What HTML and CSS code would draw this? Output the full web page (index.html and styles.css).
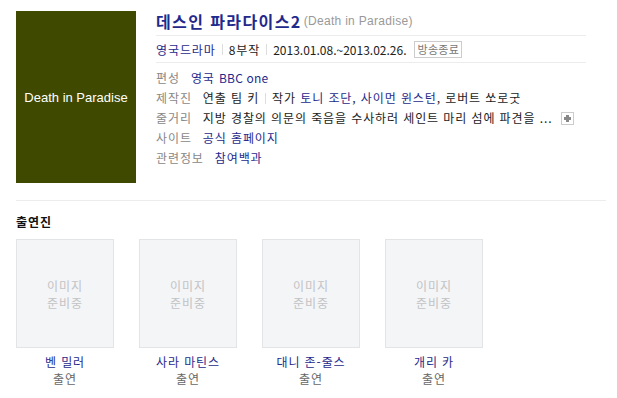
FILE: index.html
```html
<!DOCTYPE html>
<html lang="ko">
<head>
<meta charset="UTF-8">
<meta name="viewport" content="width=device-width, initial-scale=1.0">
<title>데스인 파라다이스2</title>
<link rel="stylesheet" href="styles.css">
</head>
<body>
<div class="profile">
  <div class="poster">Death in Paradise</div>
  <div class="info">
    <div class="title-row">
      <a href="#" class="title">데스인 파라다이스2</a>
      <span class="title-en">(Death in Paradise)</span>
    </div>
    <div class="meta-row">
      <a href="#" class="link">영국드라마</a>
      <span class="bar"></span>
      <span>8부작</span>
      <span class="bar"></span>
      <span class="date">2013.01.08.~2013.02.26.</span>
      <span class="badge">방송종료</span>
    </div>
    <dl class="details">
      <div class="detail">
        <dt>편성</dt>
        <dd><a href="#" class="link">영국 <span class="latin">BBC one</span></a></dd>
      </div>
      <div class="detail">
        <dt>제작진</dt>
        <dd>연출 팀 키<span class="bar"></span>작가 <a href="#" class="link">토니 조단</a>, <a href="#" class="link">사이먼 윈스턴</a>, 로버트 쏘로굿</dd>
      </div>
      <div class="detail">
        <dt>줄거리</dt>
        <dd>지방 경찰의 의문의 죽음을 수사하러 세인트 마리 섬에 파견을 ...<span class="more"></span></dd>
      </div>
      <div class="detail">
        <dt>사이트</dt>
        <dd><a href="#" class="link">공식 홈페이지</a></dd>
      </div>
      <div class="detail">
        <dt>관련정보</dt>
        <dd><a href="#" class="link">참여백과</a></dd>
      </div>
    </dl>
  </div>
</div>

<div class="cast">
  <h3>출연진</h3>
  <ul class="cast-list">
    <li class="actor">
      <div class="thumb"><span>이미지</span><span>준비중</span></div>
      <a href="#" class="name">벤 밀러</a>
      <span class="role">출연</span>
    </li>
    <li class="actor">
      <div class="thumb"><span>이미지</span><span>준비중</span></div>
      <a href="#" class="name">사라 마틴스</a>
      <span class="role">출연</span>
    </li>
    <li class="actor">
      <div class="thumb"><span>이미지</span><span>준비중</span></div>
      <a href="#" class="name">대니 존-줄스</a>
      <span class="role">출연</span>
    </li>
    <li class="actor">
      <div class="thumb"><span>이미지</span><span>준비중</span></div>
      <a href="#" class="name">개리 카</a>
      <span class="role">출연</span>
    </li>
  </ul>
</div>
</body>
</html>
```

FILE: styles.css
```css
body {
  font-family: "Noto Sans CJK KR", "Noto Sans", sans-serif;
  font-size: 12px;
  letter-spacing: 0.9px;
  color: #222;
  background-color: #fff;
  margin: 0;
  padding: 11px 11px 0 16px;
}

a {
  text-decoration: none;
}

.link {
  color: #1f2a8c;
}

.latin {
  letter-spacing: 0.2px;
}

.profile {
  display: flex;
  gap: 20px;
  padding-bottom: 17px;
  border-bottom: 1px solid #ececec;
  width: 590px;
}

.poster {
  width: 120px;
  height: 172px;
  flex-shrink: 0;
  background-color: #3f4a00;
  color: #fff;
  font-family: "Liberation Sans", Arial, sans-serif;
  font-size: 13px;
  letter-spacing: 0;
  display: flex;
  align-items: center;
  justify-content: center;
}

.info {
  width: 430px;
}

.title-row {
  height: 19px;
  padding-bottom: 5px;
  border-bottom: 1px solid #ececec;
  display: flex;
  align-items: center;
}

.title {
  color: #1f2a8c;
  font-size: 16px;
  font-weight: bold;
  letter-spacing: 1.4px;
}

.title-en {
  color: #999;
  font-size: 12px;
  margin-left: 2px;
  letter-spacing: 0.3px;
  font-family: "Liberation Sans", Arial, sans-serif;
}

.meta-row {
  height: 26px;
  border-bottom: 1px solid #ececec;
  display: flex;
  align-items: center;
}

.date {
  letter-spacing: 0;
}

.bar {
  display: inline-block;
  width: 1px;
  height: 11px;
  background-color: #ddd;
  margin: 0 6px;
  vertical-align: -1px;
}

.badge {
  margin-left: 8px;
  padding: 0 2px;
  height: 15px;
  line-height: 15px;
  border: 1px solid #ccc;
  color: #777;
  font-size: 11px;
  letter-spacing: 0.3px;
}

.details {
  margin: 4px 0 0;
}

.detail {
  display: flex;
  height: 20px;
  align-items: center;
}

.detail dt {
  color: #888;
  margin-right: 11px;
}

.detail dd {
  margin: 0;
  white-space: nowrap;
}

.more {
  position: relative;
  display: inline-block;
  width: 11px;
  height: 11px;
  border: 1px solid #ccc;
  margin-left: 9px;
  vertical-align: -2px;
}

.more::before,
.more::after {
  content: "";
  position: absolute;
  background-color: #888;
}

.more::before {
  left: 2px;
  top: 4px;
  width: 7px;
  height: 3px;
}

.more::after {
  left: 4px;
  top: 2px;
  width: 3px;
  height: 7px;
}

.cast h3 {
  font-size: 12px;
  font-weight: bold;
  margin: 12px 0 9px;
  color: #111;
}

.cast-list {
  list-style: none;
  margin: 0;
  padding: 0;
  display: flex;
  gap: 25px;
}

.actor {
  width: 98px;
  display: flex;
  flex-direction: column;
  align-items: center;
}

.thumb {
  box-sizing: border-box;
  width: 98px;
  height: 109px;
  background-color: #f4f5f7;
  border: 1px solid #e3e4e6;
  color: #c2c3c5;
  font-size: 12px;
  line-height: 17px;
  display: flex;
  flex-direction: column;
  align-items: center;
  justify-content: center;
}

.name {
  color: #1f2a8c;
  margin-top: 5px;
  line-height: 17px;
}

.role {
  color: #666;
  line-height: 17px;
}
```
